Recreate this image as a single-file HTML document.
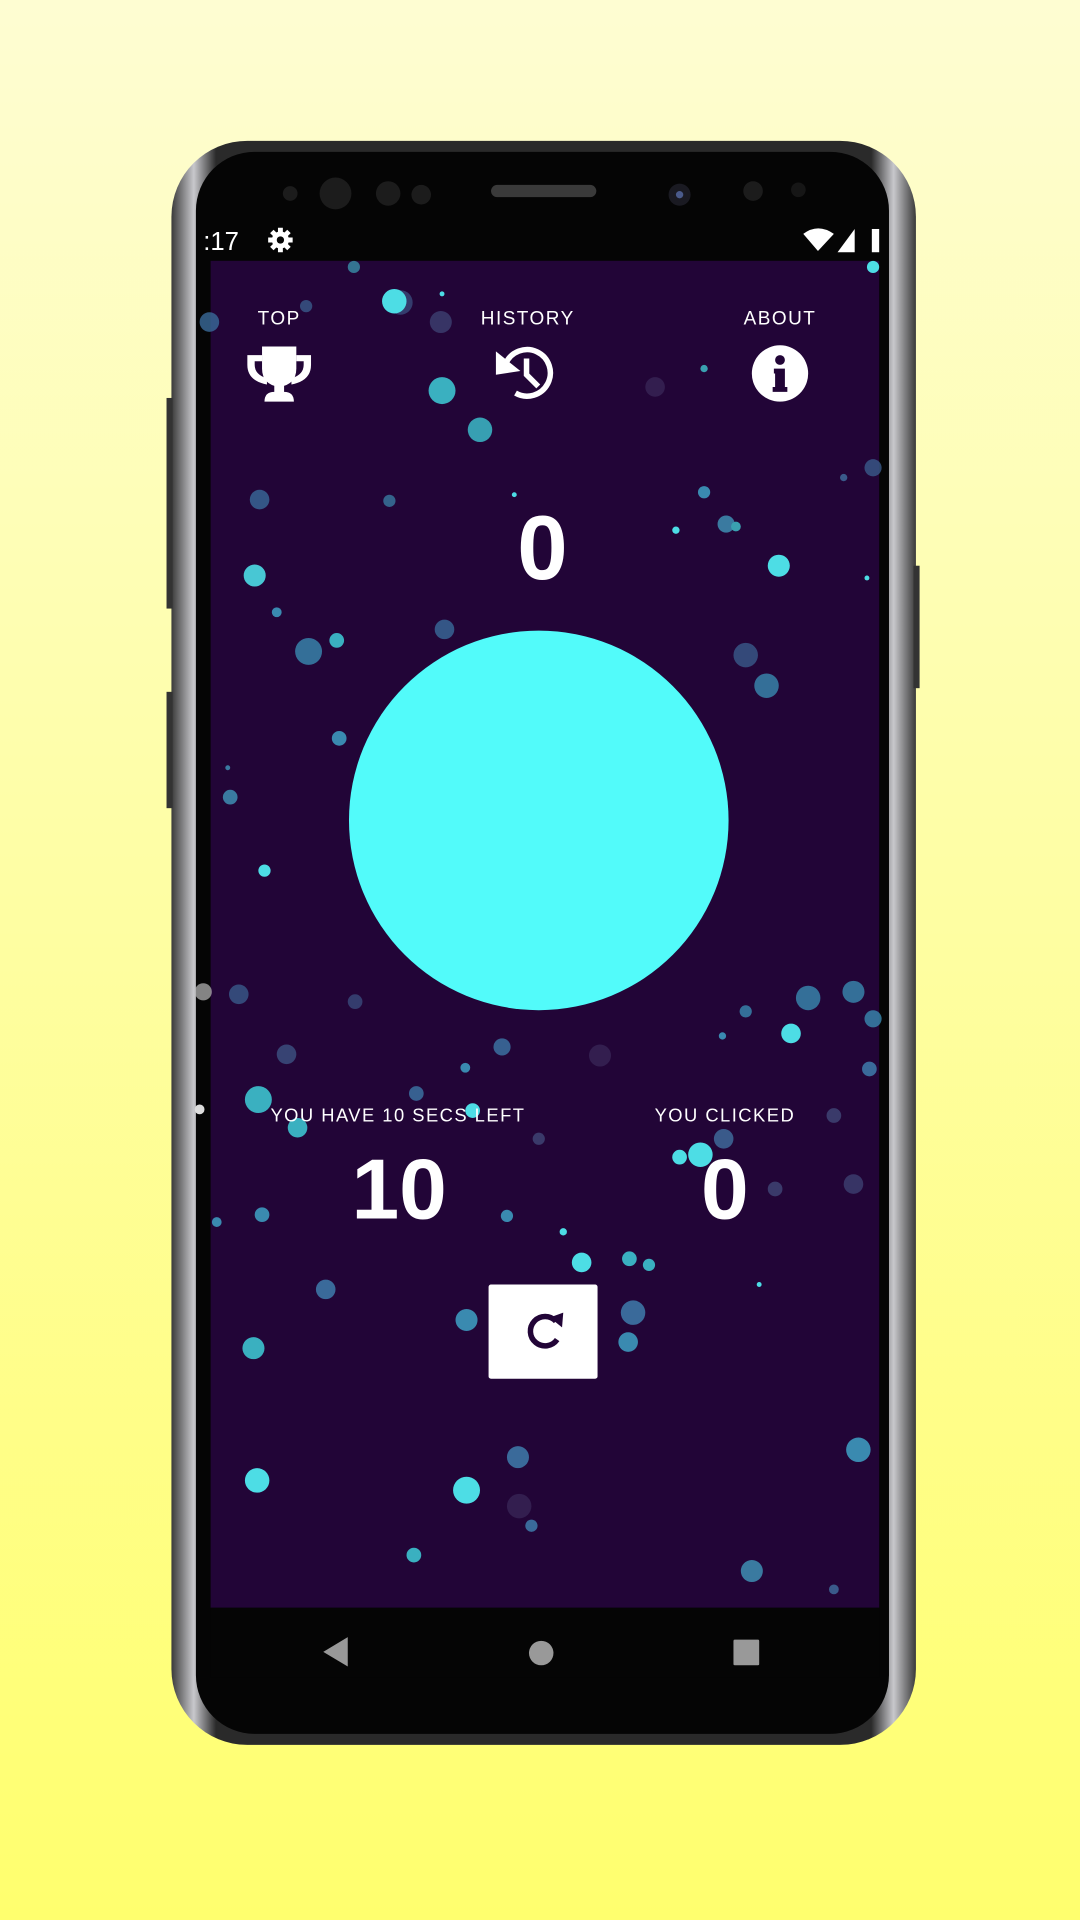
<!DOCTYPE html>
<html><head><meta charset="utf-8"><style>
html,body{margin:0;padding:0;width:1080px;height:1920px;overflow:hidden}
svg{display:block}
text{font-family:"Liberation Sans",sans-serif}
</style></head><body>
<svg width="1080" height="1920" viewBox="0 0 882 1568" xmlns="http://www.w3.org/2000/svg">
<defs>
<linearGradient id="bg" x1="0" y1="0" x2="0" y2="1">
<stop offset="0" stop-color="#fefdd2"/><stop offset="1" stop-color="#ffff6e"/>
</linearGradient>
<linearGradient id="frame" x1="0" y1="0" x2="1" y2="0">
<stop offset="0" stop-color="#3a3a3a"/><stop offset="0.03" stop-color="#c8c8cc"/><stop offset="0.06" stop-color="#2a2a2a"/>
<stop offset="0.94" stop-color="#2a2a2a"/><stop offset="0.97" stop-color="#c8c8cc"/><stop offset="1" stop-color="#3a3a3a"/>
</linearGradient>
</defs>
<rect width="882" height="1568" fill="url(#bg)"/>
<rect x="140" y="115" width="608" height="1310" rx="62" fill="url(#frame)"/>
<rect x="136" y="325" width="5" height="172" fill="#333"/>
<rect x="136" y="565" width="5" height="95" fill="#333"/>
<rect x="746" y="462" width="5" height="100" fill="#333"/>
<rect x="160" y="124" width="566" height="1292" rx="48" fill="#050505"/>
<circle cx="237" cy="158" r="6" fill="#1c1c1c"/>
<circle cx="274" cy="158" r="13" fill="#1c1c1c"/>
<circle cx="317" cy="158" r="10" fill="#1c1c1c"/>
<circle cx="344" cy="159" r="8" fill="#1c1c1c"/>
<rect x="401" y="151" width="86" height="10" rx="5" fill="#3a3a3a"/>
<circle cx="555" cy="159" r="9" fill="#1a1a22"/><circle cx="555" cy="159" r="3" fill="#4a5a8a"/>
<circle cx="615" cy="156" r="8" fill="#1c1c1c"/>
<circle cx="652" cy="155" r="6" fill="#161616"/>
<text x="166" y="204" font-size="21" fill="#fff">:17</text>
<g transform="translate(229,196)" fill="#fff">
<circle r="7"/><g stroke="#fff" stroke-width="4"><line x1="0" y1="-10" x2="0" y2="10"/><line x1="-10" y1="0" x2="10" y2="0"/><line x1="-7" y1="-7" x2="7" y2="7"/><line x1="-7" y1="7" x2="7" y2="-7"/></g>
<circle r="3" fill="#050505"/></g>
<path d="M656 191 Q668 182 681 191 L668 205 Z" fill="#fff"/>
<path d="M698 187 L698 206 L684 206 Z" fill="#fff"/>
<path d="M712 187 L718 187 L718 206 L712 206 Z" fill="#fff"/>
<rect x="172" y="213" width="546" height="1100" fill="#220537"/>
<g>
<circle cx="289" cy="218" r="5" fill="#3a8ea8" opacity=".8"/>
<circle cx="713" cy="218" r="5" fill="#4ddde5"/>
<circle cx="327" cy="247" r="10" fill="#3a4a7a" opacity=".8"/>
<circle cx="322" cy="246" r="10" fill="#4ddde5"/>
<circle cx="250" cy="250" r="5" fill="#3a5a8a" opacity=".8"/>
<circle cx="361" cy="240" r="2" fill="#4ddde5"/>
<circle cx="360" cy="263" r="9" fill="#3a3a6a" opacity=".9"/>
<circle cx="171" cy="263" r="8" fill="#3a6a9a" opacity=".8"/>
<circle cx="361" cy="319" r="11" fill="#3ab0c0"/>
<circle cx="392" cy="351" r="10" fill="#3ab0c0" opacity=".9"/>
<circle cx="535" cy="316" r="8" fill="#3a2a5a" opacity=".7"/>
<circle cx="575" cy="301" r="3" fill="#3aa0b0"/>
<circle cx="212" cy="408" r="8" fill="#3a6a9a" opacity=".8"/>
<circle cx="318" cy="409" r="5" fill="#3a7aa0" opacity=".8"/>
<circle cx="420" cy="404" r="2" fill="#4ddde5"/>
<circle cx="208" cy="470" r="9" fill="#4ddde5" opacity=".9"/>
<circle cx="226" cy="500" r="4" fill="#3a8ab0"/>
<circle cx="252" cy="532" r="11" fill="#3a8ab0" opacity=".8"/>
<circle cx="275" cy="523" r="6" fill="#3ab0c0"/>
<circle cx="363" cy="514" r="8" fill="#3a6a9a" opacity=".8"/>
<circle cx="713" cy="382" r="7" fill="#3a5a8a" opacity=".8"/>
<circle cx="689" cy="390" r="3" fill="#3a5a8a"/>
<circle cx="575" cy="402" r="5" fill="#3a8ab0"/>
<circle cx="593" cy="428" r="7" fill="#3a7aa0"/>
<circle cx="601" cy="430" r="4" fill="#3aa0b0"/>
<circle cx="552" cy="433" r="3" fill="#4ddde5"/>
<circle cx="636" cy="462" r="9" fill="#4ddde5"/>
<circle cx="708" cy="472" r="2" fill="#4ddde5"/>
<circle cx="609" cy="535" r="10" fill="#3a5a8a" opacity=".8"/>
<circle cx="626" cy="560" r="10" fill="#3a8ab0" opacity=".8"/>
<circle cx="277" cy="603" r="6" fill="#3a8ab0"/>
<circle cx="188" cy="651" r="6" fill="#3a7aa0"/>
<circle cx="186" cy="627" r="2" fill="#3a7aa0"/>
<circle cx="216" cy="711" r="5" fill="#4ddde5"/>
<circle cx="166" cy="810" r="7" fill="#bbb" opacity=".7"/>
<circle cx="195" cy="812" r="8" fill="#3a5a8a" opacity=".8"/>
<circle cx="290" cy="818" r="6" fill="#3a4a7a" opacity=".8"/>
<circle cx="660" cy="815" r="10" fill="#3a8ab0" opacity=".8"/>
<circle cx="697" cy="810" r="9" fill="#3a8ab0" opacity=".8"/>
<circle cx="713" cy="832" r="7" fill="#3a8ab0" opacity=".8"/>
<circle cx="609" cy="826" r="5" fill="#3a8ab0" opacity=".8"/>
<circle cx="646" cy="844" r="8" fill="#4ddde5"/>
<circle cx="590" cy="846" r="3" fill="#3a8ab0"/>
<circle cx="234" cy="861" r="8" fill="#3a4a7a" opacity=".9"/>
<circle cx="410" cy="855" r="7" fill="#3a6a9a" opacity=".9"/>
<circle cx="490" cy="862" r="9" fill="#3a2a5a" opacity=".7"/>
<circle cx="380" cy="872" r="4" fill="#3a8ab0"/>
<circle cx="710" cy="873" r="6" fill="#3a6a9a"/>
<circle cx="211" cy="898" r="11" fill="#3ab0c0"/>
<circle cx="163" cy="906" r="4" fill="#ddd"/>
<circle cx="340" cy="893" r="6" fill="#3a6a9a" opacity=".9"/>
<circle cx="243" cy="921" r="8" fill="#3ab0c0"/>
<circle cx="386" cy="907" r="6" fill="#4ddde5"/>
<circle cx="681" cy="911" r="6" fill="#3a3a6a"/>
<circle cx="440" cy="930" r="5" fill="#3a3a6a"/>
<circle cx="591" cy="930" r="8" fill="#3a5a8a"/>
<circle cx="572" cy="943" r="10" fill="#4ddde5"/>
<circle cx="555" cy="945" r="6" fill="#4ddde5"/>
<circle cx="697" cy="967" r="8" fill="#3a3a6a" opacity=".9"/>
<circle cx="633" cy="971" r="6" fill="#3a3a6a"/>
<circle cx="214" cy="992" r="6" fill="#3a8ab0"/>
<circle cx="414" cy="993" r="5" fill="#3a8ab0"/>
<circle cx="177" cy="998" r="4" fill="#3a8ab0"/>
<circle cx="460" cy="1006" r="3" fill="#4ddde5"/>
<circle cx="475" cy="1031" r="8" fill="#4ddde5"/>
<circle cx="514" cy="1028" r="6" fill="#3ab0c0"/>
<circle cx="530" cy="1033" r="5" fill="#3ab0c0"/>
<circle cx="266" cy="1053" r="8" fill="#3a6a9a"/>
<circle cx="620" cy="1049" r="2" fill="#4ddde5"/>
<circle cx="381" cy="1078" r="9" fill="#3a8ab0"/>
<circle cx="517" cy="1072" r="10" fill="#3a6a9a"/>
<circle cx="513" cy="1096" r="8" fill="#3a8ab0"/>
<circle cx="207" cy="1101" r="9" fill="#3ab0c0"/>
<circle cx="423" cy="1190" r="9" fill="#3a6a9a"/>
<circle cx="701" cy="1184" r="10" fill="#3a8ab0"/>
<circle cx="210" cy="1209" r="10" fill="#4ddde5"/>
<circle cx="381" cy="1217" r="11" fill="#4ddde5"/>
<circle cx="424" cy="1230" r="10" fill="#3a2a5a" opacity=".7"/>
<circle cx="434" cy="1246" r="5" fill="#3a6a9a"/>
<circle cx="338" cy="1270" r="6" fill="#3ab0c0"/>
<circle cx="614" cy="1283" r="9" fill="#3a7aa0"/>
<circle cx="681" cy="1298" r="4" fill="#3a5a8a"/>
</g>
<g fill="#fff" font-size="15.5" text-anchor="middle" letter-spacing="1.2">
<text x="228" y="265">TOP</text>
<text x="431" y="265">HISTORY</text>
<text x="637" y="265">ABOUT</text>
</g>
<!-- trophy -->
<g fill="#fff">
<path d="M214 283 H242 V301 Q242 314 228 316 Q214 314 214 301 Z"/>
<path d="M214 290 H202 V298 Q202 311 218 314 L218 309 Q208 306 208 298 V295 H214 Z"/>
<path d="M242 290 H254 V298 Q254 311 238 314 L238 309 Q248 306 248 298 V295 H242 Z"/>
<rect x="224" y="314" width="8" height="7"/>
<path d="M216 328 Q216 320 224 320 H232 Q240 320 240 328 Z"/>
</g>
<!-- history -->
<g fill="none" stroke="#fff" stroke-width="4.5">
<path d="M413 297 A19 19 0 1 1 421 321"/>
<path d="M430 295 V306 L438 314" stroke-linecap="square"/>
</g>
<path d="M405 287 L425 303 L405 306 Z" fill="#fff"/>
<circle cx="637" cy="305" r="23" fill="#fff"/>
<circle cx="637" cy="294" r="4" fill="#220537"/>
<path d="M632 301 H641 V316 H643 V320 H631 V316 H633 V305 H632 Z" fill="#220537"/>
<text x="443" y="473" fill="#fff" font-size="74" font-weight="bold" text-anchor="middle">0</text>
<circle cx="440" cy="670" r="155" fill="#52fbfa"/>
<g fill="#fff" font-size="15" text-anchor="middle" letter-spacing="1.2">
<text x="325" y="916">YOU HAVE 10 SECS LEFT</text>
<text x="592" y="916">YOU CLICKED</text>
</g>
<g fill="#fff" font-size="70" font-weight="bold" text-anchor="middle">
<text x="326" y="995">10</text>
<text x="592" y="995">0</text>
</g>
<rect x="399" y="1049" width="89" height="77" rx="2" fill="#fff"/>
<path d="M454 1079 A12 12 0 1 0 455 1094" fill="none" stroke="#220537" stroke-width="4.5"/>
<path d="M449 1076 L460 1072 L459 1084 Z" fill="#220537"/>
<rect x="172" y="1313" width="546" height="57" fill="#050505"/>
<path d="M284 1337 V1361 L264 1349 Z" fill="#999"/>
<circle cx="442" cy="1350" r="10" fill="#999"/>
<rect x="599" y="1339" width="21" height="21" rx="1" fill="#999"/>
</svg>
</body></html>
